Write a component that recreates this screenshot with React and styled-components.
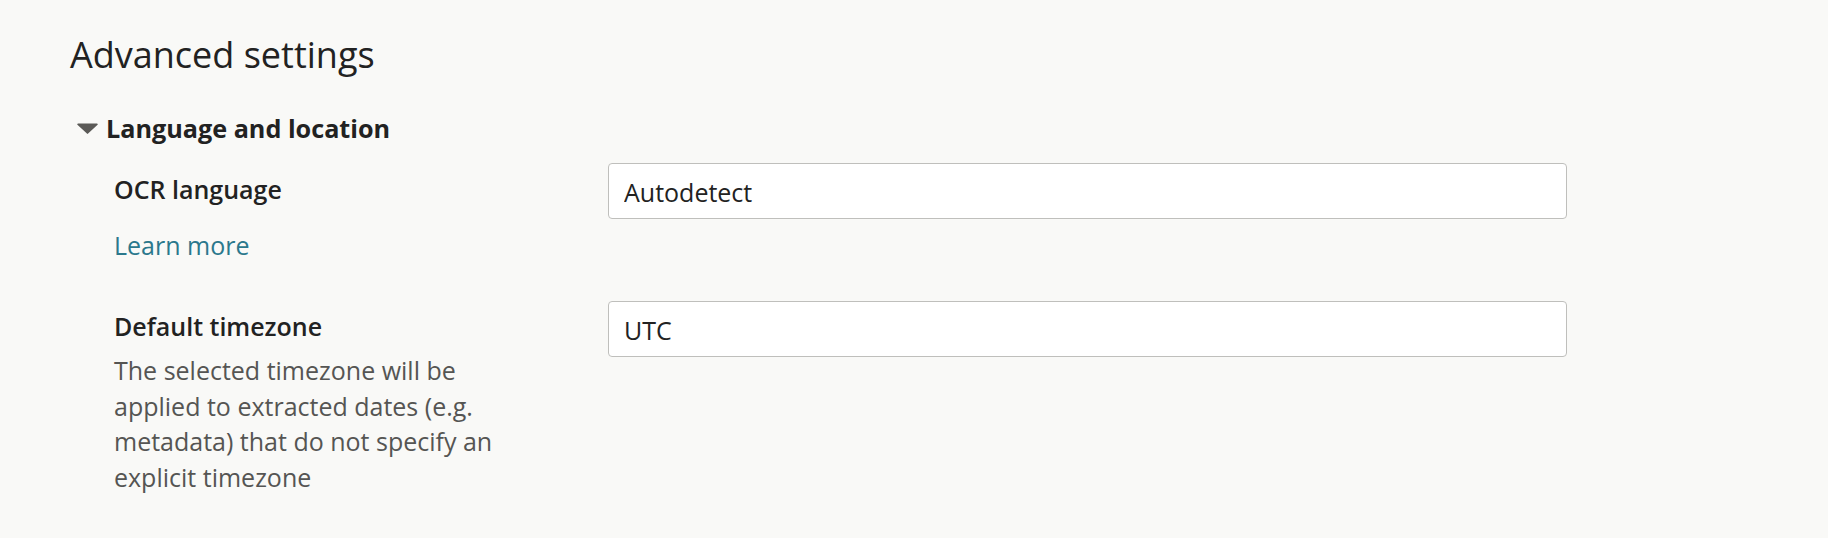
import React from 'react';
import styled, { createGlobalStyle } from 'styled-components';

const GlobalStyle = createGlobalStyle`
  body {
    margin: 0;
    background: #f9f9f7;
    font-family: 'Open Sans', 'Noto Sans', sans-serif;
    color: #222;
  }
`;

const Page = styled.main`
  padding: 33px 0 40px 70px;
`;

const Title = styled.h2`
  margin: 0;
  font-size: 36px;
  font-weight: 400;
  line-height: 1.2;
  color: #222;
`;

const Summary = styled.div`
  display: flex;
  align-items: center;
  gap: 8px;
  margin: 35px 0 0 7px;
  font-size: 25.2px;
  font-weight: 700;
  line-height: 1.4;
  color: #222;
`;

const Caret = () => (
  <svg width="21" height="11" viewBox="0 0 21 11">
    <path d="M1 0.5 H20 a0.8 0.8 0 0 1 0.6 1.3 L11.1 10.6 a0.8 0.8 0 0 1 -1.2 0 L0.4 1.8 A0.8 0.8 0 0 1 1 0.5 Z" fill="#5b5a57" />
  </svg>
);

const FieldList = styled.div`
  display: grid;
  row-gap: 38px;
  margin: 17px 0 0 44px;
`;

const FieldRow = styled.div`
  display: grid;
  grid-template-columns: 420px 959px;
  column-gap: 74px;
  align-items: start;
`;

const LabelCell = styled.div`
  padding-top: 7.5px;
`;

const Label = styled.div`
  font-size: 25px;
  font-weight: 600;
  line-height: 36px;
  color: #222;
`;

const HelpLink = styled.a`
  display: block;
  margin-top: 20px;
  font-size: 25px;
  line-height: 36px;
  color: #2b788c;
  text-decoration: none;
`;

const Help = styled.p`
  margin: 9px 0 0;
  font-size: 25px;
  line-height: 35.5px;
  color: #555553;
`;

const Input = styled.input`
  box-sizing: border-box;
  width: 100%;
  height: 56px;
  padding: 2px 15px 0;
  border: 1px solid #bfbfbc;
  border-radius: 4px;
  background: #fff;
  font-family: inherit;
  font-size: 25px;
  color: #222;
  outline: none;
`;

const fields = [
  { label: 'OCR language', value: 'Autodetect', link: 'Learn more' },
  {
    label: 'Default timezone',
    value: 'UTC',
    help: 'The selected timezone will be applied to extracted dates (e.g. metadata) that do not specify an explicit timezone',
  },
];

const App = () => (
  <>
    <GlobalStyle />
    <Page>
      <Title>Advanced settings</Title>
      <Summary>
        <Caret />
        Language and location
      </Summary>
      <FieldList>
        {fields.map((f) => (
          <FieldRow key={f.label}>
            <LabelCell>
              <Label>{f.label}</Label>
              {f.link && <HelpLink href="#">{f.link}</HelpLink>}
              {f.help && <Help>{f.help}</Help>}
            </LabelCell>
            <Input readOnly value={f.value} />
          </FieldRow>
        ))}
      </FieldList>
    </Page>
  </>
);

export default App;
